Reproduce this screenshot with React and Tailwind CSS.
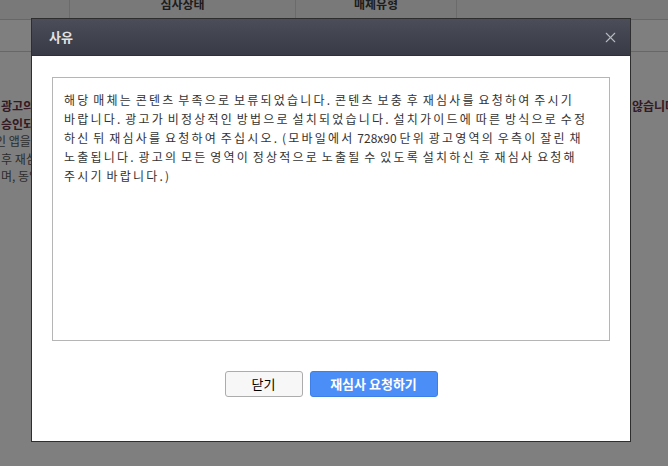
import { X } from 'lucide-react';

const FONT = { fontFamily: '"Noto Sans CJK KR", "Noto Sans", sans-serif' };

const BG_LINES = [
  { left: '광고의 콘텐츠 및 설치 상태에 따라 승인 여부가 결정되며 기준에 맞지', right: '않습니다.', bold: true },
  { left: '승인되지 않은 매체는 사유를 확인하신 후 재심사를 요청하실 수', right: '', bold: true },
  { left: '인 앱을 등록하신 경우 광고 노출 영역을 확인하여 주시기 바랍니다.', right: '', bold: false, shift: true },
  { left: '후 재심사 요청은 영업일 기준 2~3일 이내에 처리됩니다.', right: '', bold: false },
  { left: '며, 동일한 사유로 반복 보류될 경우 승인이 제한될 수 있습니다.', right: '', bold: false },
];

// line breaks as the old textarea wraps them
const REASON_LINES = [
  <>해당 매체는 콘텐츠 부족으로 보류되었습니다. 콘텐츠 보충 후 재심사를 요청하여 주시기</>,
  <>바랍니다. 광고가 비정상적인 방법으로 설치되었습니다. 설치가이드에 따른 방식으로 수정</>,
  <>하신 뒤 재심사를 요청하여 주십시오. (모바일에서 <span className="tracking-[0px]">728x90</span> 단위 광고영역의 우측이 잘린 채</>,
  <>노출됩니다. 광고의 모든 영역이 정상적으로 노출될 수 있도록 설치하신 후 재심사 요청해</>,
  <>주시기 바랍니다.)</>,
];

const App = () => {
  return (
    <div className="relative w-[668px] h-[466px] overflow-hidden bg-white" style={FONT}>
      {/* page behind the dialog */}
      <div className="flex h-[32px] -mt-[12px] bg-[#f3f3f3] border-b border-[#cfcfcf] text-[12px] font-bold text-[#3a3a3a]">
        <div className="w-[70px] border-r border-[#d6d6d6]" />
        <div className="w-[226px] border-r border-[#d6d6d6] flex items-center justify-center">심사상태</div>
        <div className="w-[161px] border-r border-[#d6d6d6] flex items-center justify-center">매체유형</div>
        <div className="flex-1" />
      </div>
      <div className="h-[32px] border-b border-[#cfcfcf]" />
      <div className="mt-[45px] text-[12px] leading-[17.5px]">
        {BG_LINES.map((l, i) => (
          <div key={i} className={`flex w-[720px] whitespace-nowrap ${l.bold ? 'font-bold text-[#6b3346]' : 'text-[#5a5a5a]'}`}>
            <div className="w-[32px] overflow-hidden">
              <div className={l.shift ? '-ml-[5px]' : 'ml-[1px]'}>{l.left}</div>
            </div>
            <div className="w-[600px]" />
            <div>{l.right}</div>
          </div>
        ))}
      </div>

      {/* dim layer */}
      <div className="absolute inset-0 bg-black/50" />

      {/* dialog */}
      <div className="absolute left-[31px] top-[18px] w-[600px] h-[424px] flex flex-col bg-white border border-[#2e2e2e]">
        <div className="h-[37px] flex items-center justify-between pl-[17px] pr-[11px] bg-gradient-to-b from-[#4b4e59] to-[#383b46] border-b border-[#2e3038]">
          <span className="text-[13px] font-bold text-[#e2e2e2]">사유</span>
          <X size={17} strokeWidth={1.5} className="text-[#b9b9c0]" />
        </div>
        <div className="flex-1 flex flex-col px-[20px] pt-[21px]">
          <div className="h-[264px] border border-[#b5b5b5] pl-[11px] pr-[8px] pt-[12px] text-[12px] leading-[19px] tracking-[2.2px] [word-spacing:-2.1px] text-[#333] overflow-hidden">
            {REASON_LINES.map((line, i) => (
              <div key={i} className="whitespace-nowrap">{line}</div>
            ))}
          </div>
          <div className="flex justify-center gap-[7px] mt-[30px]">
            <button className="w-[78px] h-[26px] rounded-[3px] border border-[#acacac] bg-[#f7f7f7] text-[13px] text-black">
              닫기
            </button>
            <button className="w-[128px] h-[26px] rounded-[3px] border border-[#3d7fe6] bg-[#4c8ef8] text-[13px] font-bold text-white">
              재심사 요청하기
            </button>
          </div>
        </div>
      </div>
    </div>
  );
};

export default App;
